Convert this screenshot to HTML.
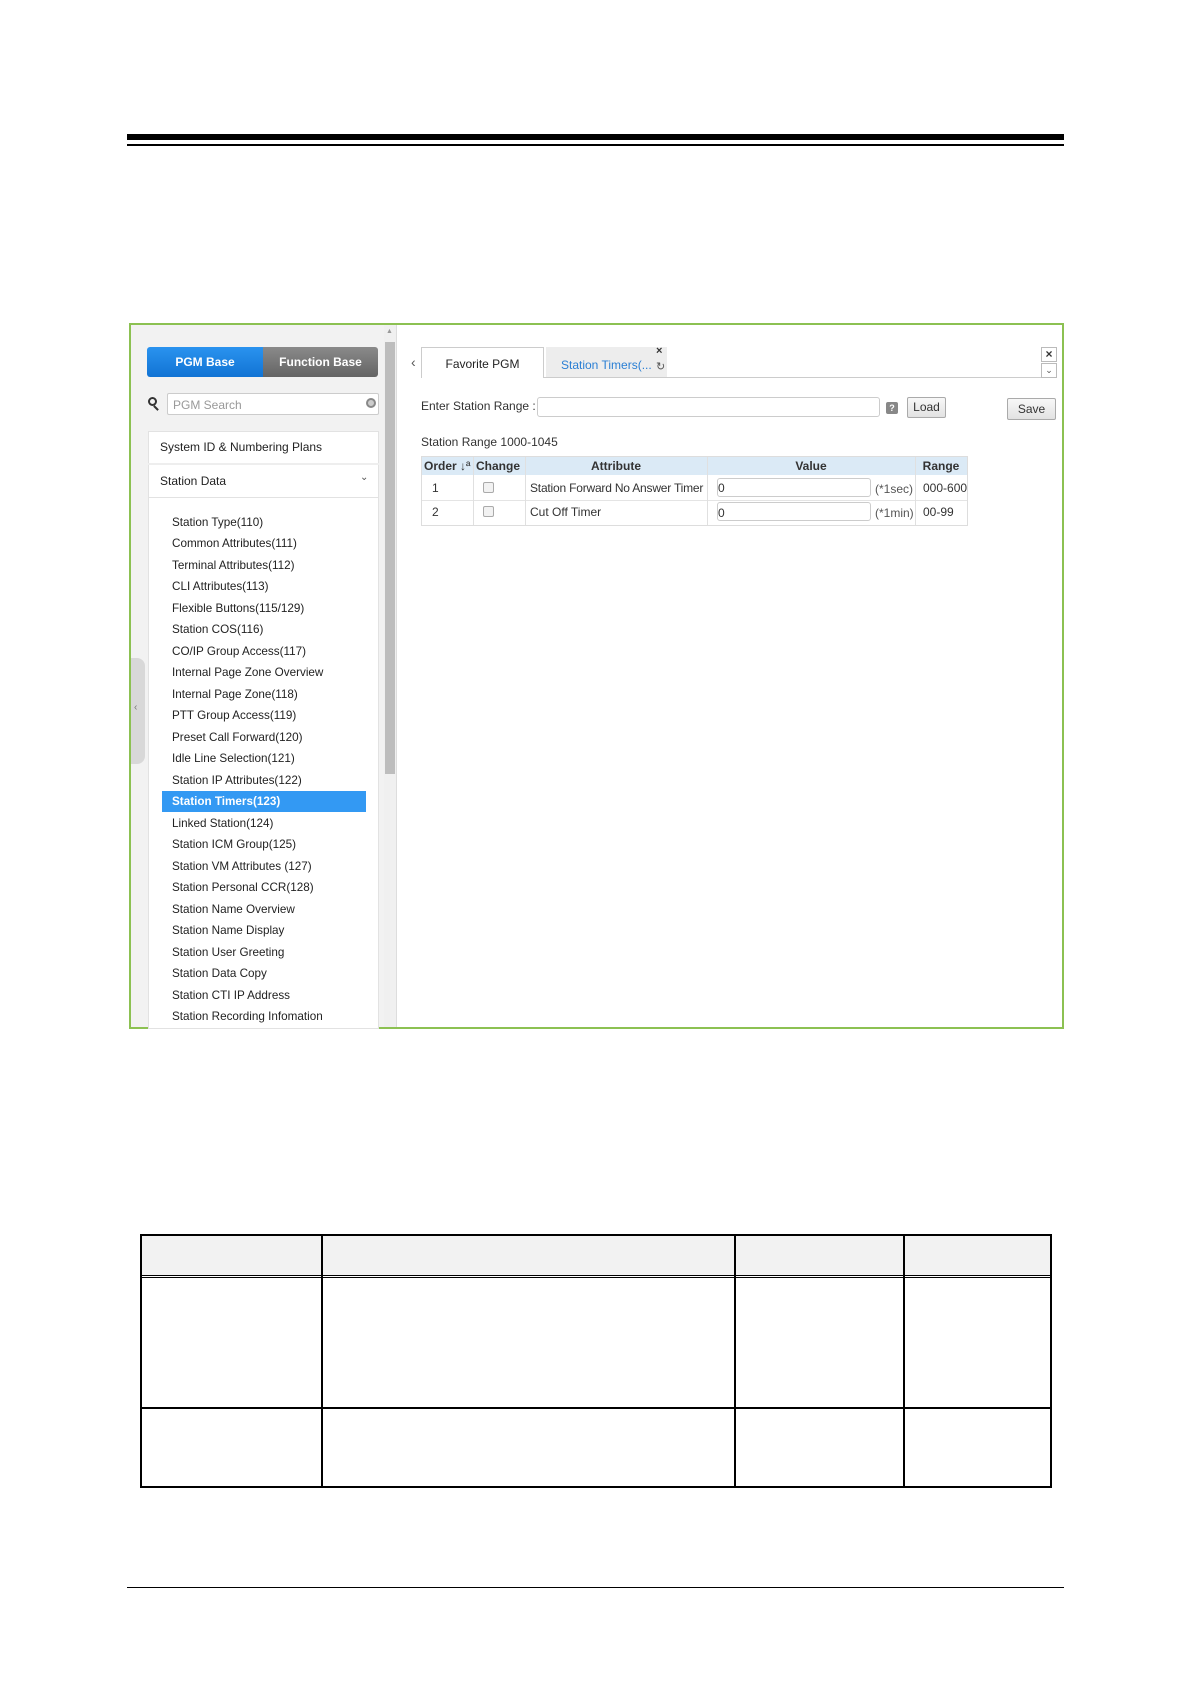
<!DOCTYPE html>
<html><head><meta charset="utf-8"><style>
*{box-sizing:border-box;margin:0;padding:0}
body{width:1191px;height:1684px;background:#fff;position:relative;font-family:"Liberation Sans",sans-serif;color:#333;overflow:hidden}
.a{position:absolute}
.mi{position:absolute;left:172px;font-size:11.7px;line-height:21px;color:#222;white-space:nowrap}
.t{font-size:12px;color:#333;white-space:nowrap}
</style></head><body>
<div class="a" style="left:127px;top:134px;width:937px;height:6px;background:#000"></div>
<div class="a" style="left:127px;top:144px;width:937px;height:2px;background:#000"></div>

<!-- frame -->
<div class="a" style="left:129px;top:323px;width:935px;height:706px;border:2px solid #8cc152;background:#fff"></div>
<div class="a" style="left:131px;top:325px;width:266px;height:702px;background:#f2f2f2;border-right:1px solid #ddd"></div>
<div class="a" style="left:131px;top:658px;width:14px;height:106px;background:#d8d8d8;border-radius:0 8px 8px 0"></div>
<div class="a t" style="left:134px;top:702px;font-size:10px;color:#777">&#8249;</div>
<div class="a" style="left:384px;top:325px;width:12px;height:702px;background:#f0f0f0"></div>
<div class="a" style="left:385px;top:342px;width:10px;height:432px;background:#bdbdbd"></div>
<div class="a" style="left:386px;top:328px;font-size:7px;color:#999">&#9650;</div>

<div class="a" style="left:147px;top:347px;width:116px;height:30px;background:linear-gradient(#2a93ef,#1173d4);border-radius:3px 0 0 3px;color:#fff;font-size:12px;font-weight:bold;text-align:center;line-height:30px">PGM Base</div>
<div class="a" style="left:263px;top:347px;width:115px;height:30px;background:linear-gradient(#8a8a8a,#646464);border-radius:0 3px 3px 0;color:#fff;font-size:12px;font-weight:bold;text-align:center;line-height:30px">Function Base</div>
<div class="a" style="left:148px;top:397px;width:9px;height:9px;border:2px solid #333;border-radius:50%"></div>
<div class="a" style="left:155px;top:405px;width:2px;height:6px;background:#333;transform:rotate(-45deg)"></div>
<div class="a" style="left:167px;top:393px;width:212px;height:22px;border:1px solid #ccc;background:#fff;border-radius:2px"></div>
<div class="a t" style="left:173px;top:398px;color:#999;font-size:12px">PGM Search</div>
<div class="a" style="left:366px;top:398px;width:10px;height:10px;border:2px solid #888;border-radius:50%;background:#ccc"></div>
<div class="a" style="left:148px;top:431px;width:231px;height:598px;background:#fff;border:1px solid #e2e2e2"></div>
<div class="a" style="left:148px;top:463px;width:231px;height:2px;background:#eee"></div>
<div class="a" style="left:148px;top:497px;width:231px;height:1px;background:#e2e2e2"></div>
<div class="a t" style="left:160px;top:440px;font-size:12px;color:#222">System ID &amp; Numbering Plans</div>
<div class="a t" style="left:160px;top:474px;font-size:12px;color:#222">Station Data</div>
<div class="a t" style="left:360px;top:472px;font-size:10px;color:#555">&#8964;</div>
<div class="a" style="left:162px;top:791px;width:204px;height:21px;background:#3399f3"></div>

<div class="mi" style="top:512px">Station Type(110)</div>
<div class="mi" style="top:533px">Common Attributes(111)</div>
<div class="mi" style="top:555px">Terminal Attributes(112)</div>
<div class="mi" style="top:576px">CLI Attributes(113)</div>
<div class="mi" style="top:598px">Flexible Buttons(115/129)</div>
<div class="mi" style="top:619px">Station COS(116)</div>
<div class="mi" style="top:641px">CO/IP Group Access(117)</div>
<div class="mi" style="top:662px">Internal Page Zone Overview</div>
<div class="mi" style="top:684px">Internal Page Zone(118)</div>
<div class="mi" style="top:705px">PTT Group Access(119)</div>
<div class="mi" style="top:727px">Preset Call Forward(120)</div>
<div class="mi" style="top:748px">Idle Line Selection(121)</div>
<div class="mi" style="top:770px">Station IP Attributes(122)</div>
<div class="mi" style="top:791px;color:#fff;font-weight:bold">Station Timers(123)</div>
<div class="mi" style="top:813px">Linked Station(124)</div>
<div class="mi" style="top:834px">Station ICM Group(125)</div>
<div class="mi" style="top:856px">Station VM Attributes (127)</div>
<div class="mi" style="top:877px">Station Personal CCR(128)</div>
<div class="mi" style="top:899px">Station Name Overview</div>
<div class="mi" style="top:920px">Station Name Display</div>
<div class="mi" style="top:942px">Station User Greeting</div>
<div class="mi" style="top:963px">Station Data Copy</div>
<div class="mi" style="top:985px">Station CTI IP Address</div>
<div class="mi" style="top:1006px">Station Recording Infomation</div>

<!-- right pane -->
<div class="a t" style="left:411px;top:354px;font-size:14px;color:#555">&#8249;</div>
<div class="a" style="left:421px;top:377px;width:636px;height:1px;background:#ccc"></div>
<div class="a" style="left:421px;top:347px;width:123px;height:31px;border:1px solid #ccc;border-bottom:none;background:#fff"></div>
<div class="a t" style="left:421px;top:357px;width:123px;text-align:center;font-size:12px;color:#222">Favorite PGM</div>
<div class="a" style="left:546px;top:347px;width:121px;height:30px;background:#ededed"></div>
<div class="a t" style="left:561px;top:358px;font-size:12px;color:#2a7fd4">Station Timers(...</div>
<div class="a t" style="left:656px;top:345px;font-size:11px;color:#333;font-weight:bold">×</div>
<div class="a t" style="left:656px;top:360px;font-size:11px;color:#555">&#8635;</div>
<div class="a" style="left:1041px;top:347px;width:16px;height:15px;border:1px solid #bbb;text-align:center;font-size:12px;line-height:13px;font-weight:bold;color:#333">×</div>
<div class="a" style="left:1041px;top:363px;width:16px;height:15px;border:1px solid #bbb;text-align:center;font-size:9px;line-height:13px;color:#555">&#8964;</div>

<div class="a t" style="left:421px;top:399px;font-size:12px">Enter Station Range :</div>
<div class="a" style="left:537px;top:397px;width:343px;height:20px;border:1px solid #ccc;border-radius:3px;background:#fff"></div>
<div class="a" style="left:886px;top:402px;width:12px;height:12px;background:#888;border-radius:2px;color:#fff;font-size:9px;text-align:center;line-height:12px;font-weight:bold">?</div>
<div class="a" style="left:907px;top:397px;width:39px;height:21px;border:1px solid #aaa;border-radius:2px;background:linear-gradient(#f8f8f8,#e2e2e2);font-size:12px;text-align:center;line-height:19px;color:#333">Load</div>
<div class="a" style="left:1007px;top:398px;width:49px;height:22px;border:1px solid #aaa;border-radius:2px;background:linear-gradient(#f8f8f8,#e2e2e2);font-size:12px;text-align:center;line-height:20px;color:#333">Save</div>
<div class="a t" style="left:421px;top:435px;font-size:12px">Station Range 1000-1045</div>

<div class="a" style="left:421px;top:456px;width:547px;height:70px;border:1px solid #ddd;background:#fff"></div>
<div class="a" style="left:422px;top:457px;width:545px;height:18px;background:#dbeaf6"></div>
<div class="a" style="left:422px;top:500px;width:545px;height:1px;background:#e4e4e4"></div>
<div class="a" style="left:473px;top:457px;width:1px;height:68px;background:#e0e0e0"></div>
<div class="a" style="left:525px;top:457px;width:1px;height:68px;background:#e0e0e0"></div>
<div class="a" style="left:707px;top:457px;width:1px;height:68px;background:#e0e0e0"></div>
<div class="a" style="left:915px;top:457px;width:1px;height:68px;background:#e0e0e0"></div>
<div class="a t" style="left:424px;top:459px;font-weight:bold;font-size:12px">Order <span style="font-weight:normal">&#8595;ª</span></div>
<div class="a t" style="left:476px;top:459px;font-weight:bold;font-size:12px">Change</div>
<div class="a t" style="left:525px;top:459px;width:182px;text-align:center;font-weight:bold;font-size:12px">Attribute</div>
<div class="a t" style="left:707px;top:459px;width:208px;text-align:center;font-weight:bold;font-size:12px">Value</div>
<div class="a t" style="left:915px;top:459px;width:52px;text-align:center;font-weight:bold;font-size:12px">Range</div>

<div class="a t" style="left:432px;top:481px">1</div>
<div class="a" style="left:483px;top:482px;width:11px;height:11px;border:1px solid #aaa;border-radius:2px;background:#f2f2f2"></div>
<div class="a t" style="left:530px;top:481px;letter-spacing:-0.2px">Station Forward No Answer Timer</div>
<div class="a" style="left:717px;top:478px;width:154px;height:19px;border:1px solid #ccc;border-radius:3px"></div>
<div class="a t" style="left:718px;top:481px">0</div>
<div class="a t" style="left:875px;top:482px;color:#555">(*1sec)</div>
<div class="a t" style="left:923px;top:481px">000-600</div>

<div class="a t" style="left:432px;top:505px">2</div>
<div class="a" style="left:483px;top:506px;width:11px;height:11px;border:1px solid #aaa;border-radius:2px;background:#f2f2f2"></div>
<div class="a t" style="left:530px;top:505px">Cut Off Timer</div>
<div class="a" style="left:717px;top:502px;width:154px;height:19px;border:1px solid #ccc;border-radius:3px"></div>
<div class="a t" style="left:718px;top:506px">0</div>
<div class="a t" style="left:875px;top:506px;color:#555">(*1min)</div>
<div class="a t" style="left:923px;top:505px">00-99</div>

<!-- bottom table -->
<div class="a" style="left:140px;top:1234px;width:912px;height:254px;border:2px solid #000"></div>
<div class="a" style="left:142px;top:1236px;width:908px;height:39px;background:#f2f2f2"></div>
<div class="a" style="left:140px;top:1275px;width:912px;height:1px;background:#000"></div>
<div class="a" style="left:140px;top:1277px;width:912px;height:1px;background:#000"></div>
<div class="a" style="left:140px;top:1407px;width:912px;height:2px;background:#000"></div>
<div class="a" style="left:321px;top:1234px;width:2px;height:254px;background:#000"></div>
<div class="a" style="left:734px;top:1234px;width:2px;height:254px;background:#000"></div>
<div class="a" style="left:903px;top:1234px;width:2px;height:254px;background:#000"></div>

<div class="a" style="left:127px;top:1587px;width:937px;height:1px;background:#000"></div>
</body></html>
